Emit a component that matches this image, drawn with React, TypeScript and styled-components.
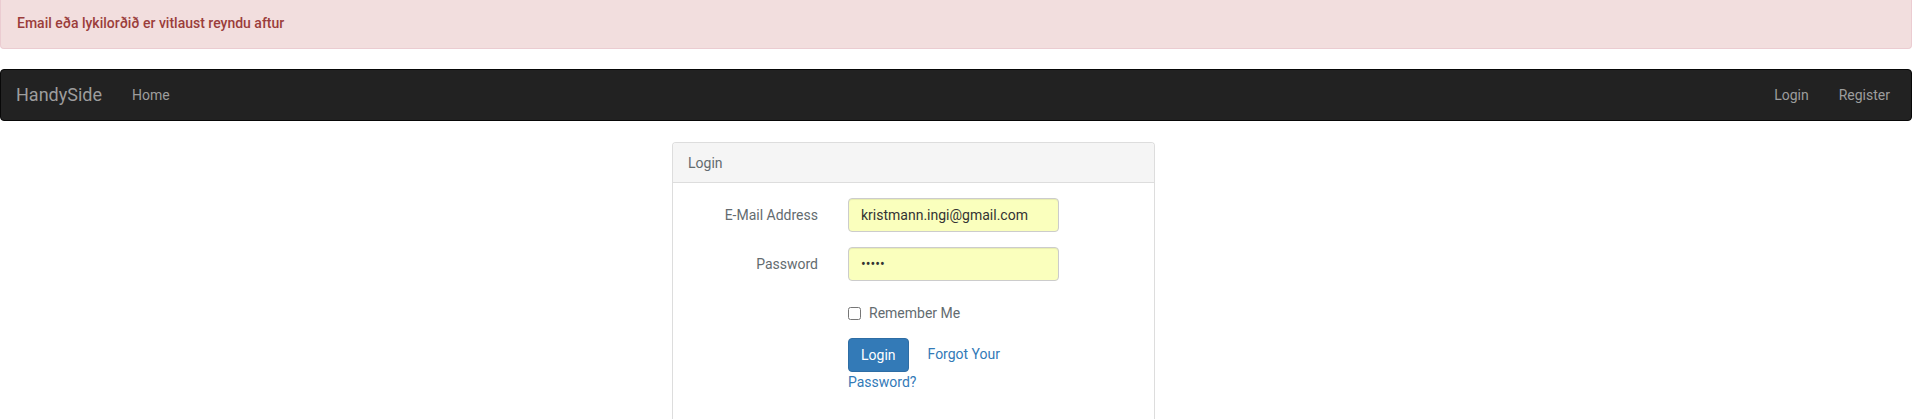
import React from "react";
import styled, { createGlobalStyle } from "styled-components";

const Global = createGlobalStyle`
  html, body { margin: 0; padding: 0; background: #fff; }
  body { font-family: Roboto, "Helvetica Neue", Arial, sans-serif; font-size: 14px; line-height: 20px; color: #636b6f; }
  * { box-sizing: border-box; }
`;

const Alert = styled.div`
  background: #f2dede;
  border: 1px solid #ebccd1;
  border-top: 0;
  border-radius: 0 0 4px 4px;
  color: #9b3d3b;
  font-size: 14px;
  font-weight: 500;
  line-height: 22px;
  padding: 12px 16px 14px;
  margin-bottom: 20px;
`;

const Navbar = styled.nav`
  display: flex;
  align-items: center;
  height: 52px;
  background: #222;
  border: 1px solid #080808;
  border-radius: 4px;
  padding: 0 6px 0 0;
  margin-bottom: 21px;
`;

const Brand = styled.a`
  font-size: 18px;
  line-height: 20px;
  color: #9d9d9d;
  padding: 15px;
  text-decoration: none;
`;

const NavList = styled.div<{ $right?: boolean }>`
  display: flex;
  margin-left: ${(p) => (p.$right ? "auto" : "0")};
`;

const NavLink = styled.a`
  color: #9d9d9d;
  font-size: 14px;
  line-height: 20px;
  padding: 15px;
  text-decoration: none;
`;

const Content = styled.div`
  padding-left: 672px;
`;

const Panel = styled.div`
  width: 483px;
  border: 1px solid #ddd;
  border-bottom: 0;
  border-radius: 4px 4px 0 0;
  background: #fff;
`;

const PanelHeading = styled.div`
  background: #f5f5f5;
  border-bottom: 1px solid #ddd;
  border-radius: 3px 3px 0 0;
  padding: 10px 15px 9px;
  color: #636b6f;
  line-height: 20px;
`;

const PanelBody = styled.div`
  padding: 15px 0 40px;
`;

const FormRow = styled.div<{ $gap?: number }>`
  display: grid;
  grid-template-columns: 160px 241px;
  align-items: center;
  margin-bottom: ${(p) => p.$gap ?? 15}px;
`;

const Label = styled.label`
  text-align: right;
  padding-right: 15px;
  color: #636b6f;
  line-height: 20px;
`;

const Field = styled.div`
  padding: 0 15px;
`;

const Input = styled.input`
  display: block;
  width: 100%;
  height: 34px;
  padding: 6px 12px;
  font-family: Roboto, Arial, sans-serif;
  font-size: 14px;
  line-height: 20px;
  color: #333;
  background: #faffbd;
  border: 1px solid #ccc;
  border-radius: 4px;
  box-shadow: inset 0 1px 1px rgba(0, 0, 0, 0.075);
  outline: none;
`;

const CheckLabel = styled.label`
  display: flex;
  align-items: center;
  padding-top: 7px;
  color: #636b6f;
  line-height: 20px;
`;

const Check = styled.input`
  width: 13px;
  height: 13px;
  margin: 0 8px 0 0;
`;

const Button = styled.button`
  display: inline-block;
  vertical-align: middle;
  height: 34px;
  padding: 6px 12px;
  font-family: Roboto, Arial, sans-serif;
  font-size: 14px;
  line-height: 20px;
  color: #fff;
  background: #337ab7;
  border: 1px solid #2e6da4;
  border-radius: 4px;
`;

const Link = styled.a`
  color: #337ab7;
  text-decoration: none;
  margin-left: 19px;
  line-height: 20px;
`;

const Actions = styled.div`
  line-height: 20px;
`;

export default function App() {
  return (
    <>
      <Global />
      <Alert>Email eða lykilorðið er vitlaust reyndu aftur</Alert>
      <Navbar>
        <Brand href="#">HandySide</Brand>
        <NavList>
          <NavLink href="#">Home</NavLink>
        </NavList>
        <NavList $right>
          <NavLink href="#">Login</NavLink>
          <NavLink href="#">Register</NavLink>
        </NavList>
      </Navbar>
      <Content>
        <Panel>
          <PanelHeading>Login</PanelHeading>
          <PanelBody>
            <FormRow>
              <Label htmlFor="email">E-Mail Address</Label>
              <Field>
                <Input id="email" type="email" defaultValue="kristmann.ingi@gmail.com" />
              </Field>
            </FormRow>
            <FormRow>
              <Label htmlFor="password">Password</Label>
              <Field>
                <Input id="password" type="password" defaultValue="12345" />
              </Field>
            </FormRow>
            <FormRow>
              <span />
              <Field>
                <CheckLabel>
                  <Check type="checkbox" />
                  Remember Me
                </CheckLabel>
              </Field>
            </FormRow>
            <FormRow>
              <span />
              <Field>
                <Actions>
                  <Button type="submit">Login</Button>
                  <Link href="#">Forgot Your Password?</Link>
                </Actions>
              </Field>
            </FormRow>
          </PanelBody>
        </Panel>
      </Content>
    </>
  );
}
